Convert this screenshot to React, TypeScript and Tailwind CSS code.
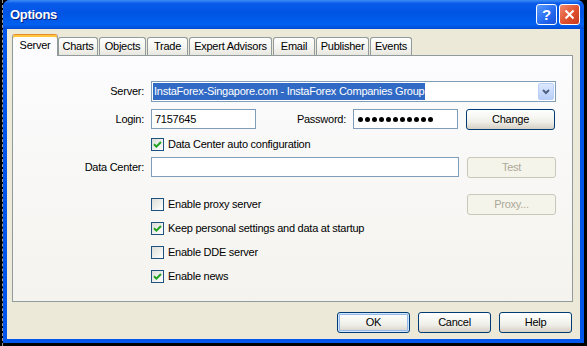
import React from "react";

const font = { fontFamily: '"Liberation Sans", Arial, sans-serif' };

function XPButton({ label, w, disabled, focused }: { label: string; w: number; disabled?: boolean; focused?: boolean }) {
  return (
    <div
      className={`h-[21px] flex items-center justify-center rounded-[3px] border text-[11px] ${
        disabled
          ? "border-[#C9C7BA] text-[#ACA899] bg-[#F5F4EA]"
          : "border-[#003C74] text-black bg-[linear-gradient(#FFFFFF,#F0F0EA_60%,#D6D0C5)]"
      } ${focused ? "shadow-[inset_0_0_0_1px_#CEE7FF,inset_0_0_0_2px_#98B8EA]" : ""}`}
      style={{ width: w }}
    >
      {label}
    </div>
  );
}

function Check({ checked, label }: { checked?: boolean; label: string }) {
  return (
    <div className="flex items-center h-[24px]">
      <div className="w-[13px] h-[13px] border border-[#1C5180] bg-[linear-gradient(135deg,#DCDCD7,#FFFFFF)] flex items-center justify-center">
        {checked && (
          <svg width="9" height="9" viewBox="0 0 9 9">
            <path d="M1 4.2 L3.4 6.6 L8 2" stroke="#21A121" strokeWidth="2" fill="none" />
          </svg>
        )}
      </div>
      <span className="ml-[4px] text-[11px] text-black">{label}</span>
    </div>
  );
}

const tabs = [
  { n: "Server", w: 46 },
  { n: "Charts", w: 40 },
  { n: "Objects", w: 47 },
  { n: "Trade", w: 41 },
  { n: "Expert Advisors", w: 83 },
  { n: "Email", w: 42 },
  { n: "Publisher", w: 53 },
  { n: "Events", w: 42 },
];

export default function App() {
  return (
    <div className="w-[587px] h-[346px] bg-black overflow-hidden flex tracking-[-0.25px]" style={font}>
      <div className="w-[3px] h-full border-r border-dashed border-[#9A9A9A]" />
      <div className="w-[581px] h-[343px] flex flex-col bg-[#0055EA] rounded-t-[7px] overflow-hidden">
        {/* title bar */}
        <div className="h-[29px] flex items-center pl-[6px] pr-[4px] bg-[linear-gradient(#3C8CF5_0%,#0A5BEA_12%,#0054E3_45%,#0060F0_85%,#0049D0_100%)]">
          <span className="text-white font-bold text-[13px] ml-[1px] tracking-[-0.3px] [text-shadow:1px_1px_0_#0A1E7A]">Options</span>
          <div className="ml-auto flex gap-[2px]">
            <div className="w-[21px] h-[21px] rounded-[3px] border border-white bg-[linear-gradient(135deg,#5A9BFF,#2468F0_60%,#1950D8)] flex items-center justify-center text-white font-bold text-[15px] leading-none">
              ?
            </div>
            <div className="w-[21px] h-[21px] rounded-[3px] border border-white bg-[linear-gradient(135deg,#F08A6C,#E0502E_55%,#C63A1E)] flex items-center justify-center">
              <svg width="11" height="11" viewBox="0 0 11 11">
                <path d="M1.5 1.5 L9.5 9.5 M9.5 1.5 L1.5 9.5" stroke="white" strokeWidth="2" />
              </svg>
            </div>
          </div>
        </div>
        {/* client */}
        <div className="flex-1 mx-[4px] mb-[4px] bg-[#ECE9D8] flex flex-col pl-[5px] pr-[8px]">
          <div className="mt-[5px] h-[21px] flex items-end relative z-10">
            {tabs.map((t, i) =>
              i === 0 ? (
                <div
                  key={t.n}
                  className="h-[22px] -mb-[1px] border border-b-0 border-[#919B9C] border-t-[#E68B2C] rounded-t-[3px] bg-[#FCFCFE] flex items-center justify-center text-[11px] text-black shadow-[inset_0_2px_0_#FFC73C]"
                  style={{ width: t.w }}
                >
                  {t.n}
                </div>
              ) : (
                <div
                  key={t.n}
                  className={`h-[18px] border border-b-0 border-[#919B9C] rounded-t-[3px] bg-[linear-gradient(#FFFFFF,#F3F3EF_60%,#E8E6DE)] flex items-center justify-center text-[11px] text-black ${
                    i === 1 ? "" : "ml-[1px]"
                  }`}
                  style={{ width: t.w }}
                >
                  {t.n}
                </div>
              )
            )}
          </div>
          <div className="w-[561px] h-[247px] border border-[#919B9C] bg-[linear-gradient(#FCFCFE,#F4F3EE)] flex flex-col pt-[25px] text-[11px] text-black">
            {/* Server row */}
            <div className="flex items-center h-[21px]">
              <div className="w-[131px] text-right">Server:</div>
              <div className="ml-[7px] w-[405px] h-[21px] border border-[#7F9DB9] bg-white flex items-center pl-[1px] pr-[1px]">
                <span className="bg-[#316AC5] text-white h-[17px] leading-[17px] pl-[1px] pr-[1px]">
                  InstaForex-Singapore.com - InstaForex Companies Group
                </span>
                <div className="ml-auto w-[16px] h-[17px] rounded-[2px] border border-[#B9CEF8] bg-[linear-gradient(#DCE8FE,#B8CEF8)] flex items-center justify-center">
                  <svg width="8" height="6" viewBox="0 0 8 6">
                    <path d="M1 1 L4 4 L7 1" stroke="#4D6185" strokeWidth="2" fill="none" />
                  </svg>
                </div>
              </div>
            </div>
            {/* Login row */}
            <div className="flex items-center h-[22px] mt-[6px]">
              <div className="w-[131px] text-right">Login:</div>
              <div className="ml-[7px] w-[105px] h-[20px] border border-[#7F9DB9] bg-white flex items-center pl-[3px]">7157645</div>
              <div className="w-[90px] text-right">Password:</div>
              <div className="ml-[7px] w-[105px] h-[20px] border border-[#7F9DB9] bg-white flex items-center pl-[4px] gap-[2px]">
                {Array.from({ length: 11 }).map((_, i) => (
                  <div key={i} className="w-[5px] h-[5px] rounded-full bg-black" />
                ))}
              </div>
              <div className="ml-[8px]">
                <XPButton label="Change" w={89} />
              </div>
            </div>
            {/* DC auto */}
            <div className="flex mt-[2px]">
              <div className="w-[138px]" />
              <Check checked label="Data Center auto configuration" />
            </div>
            {/* Data center */}
            <div className="flex items-center h-[22px]">
              <div className="w-[131px] text-right">Data Center:</div>
              <div className="ml-[7px] w-[308px] h-[20px] border border-[#7F9DB9] bg-white" />
              <div className="ml-[8px]">
                <XPButton label="Test" w={89} disabled />
              </div>
            </div>
            {/* proxy */}
            <div className="flex items-center mt-[14px]">
              <div className="w-[138px]" />
              <div className="w-[316px]">
                <Check label="Enable proxy server" />
              </div>
              <XPButton label="Proxy..." w={89} disabled />
            </div>
            <div className="flex">
              <div className="w-[138px]" />
              <Check checked label="Keep personal settings and data at startup" />
            </div>
            <div className="flex">
              <div className="w-[138px]" />
              <Check label="Enable DDE server" />
            </div>
            <div className="flex">
              <div className="w-[138px]" />
              <Check checked label="Enable news" />
            </div>
          </div>
          <div className="mt-[10px] flex justify-end gap-[8px] pr-[0px]">
            <XPButton label="OK" w={73} focused />
            <XPButton label="Cancel" w={73} />
            <XPButton label="Help" w={73} />
          </div>
        </div>
      </div>
    </div>
  );
}
